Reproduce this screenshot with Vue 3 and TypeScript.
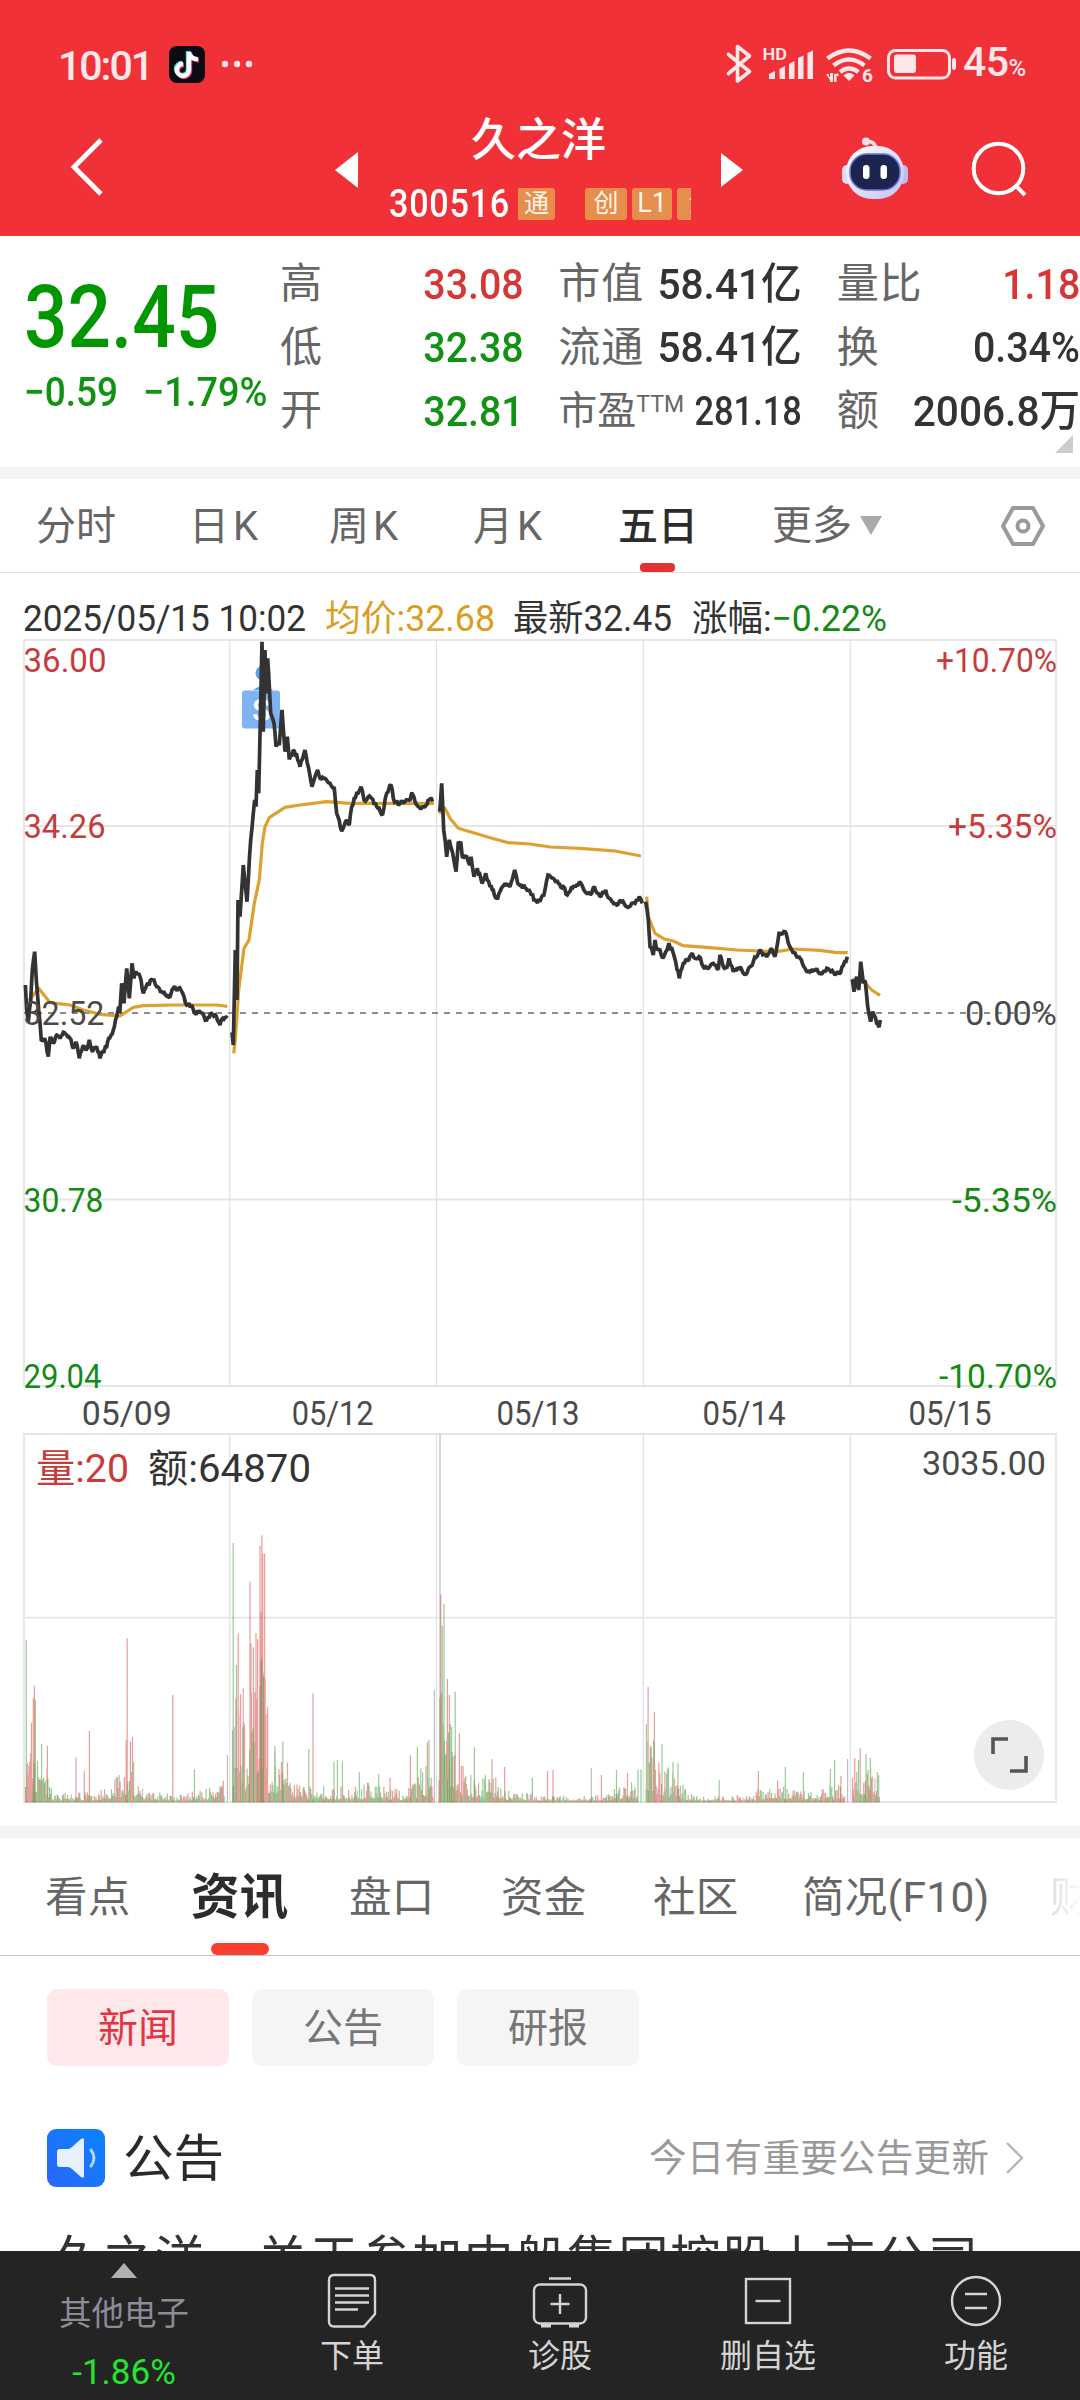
<script setup lang="ts">
type Point = [number, number]
type Tone = 'up' | 'down' | 'flat'
type Spike = [number, number, Tone]

const stats = [
  [{ k: '高', v: '33.08', c: 'red' }, { k: '市值', v: '58.41亿', c: 'wide' }, { k: '量比', v: '1.18', c: 'red' }],
  [{ k: '低', v: '32.38', c: 'green' }, { k: '流通', v: '58.41亿', c: 'wide' }, { k: '换', v: '0.34%' }],
  [{ k: '开', v: '32.81', c: 'green' }, { k: '市盈', sup: 'TTM', v: '281.18', c: 'small' }, { k: '额', v: '2006.8万', c: 'wide' }],
] as { k: string; v: string; c?: string; sup?: string }[][]

const periods = [
  { t: '分时', w: 153 },
  { t: '日K', w: 140, k: true },
  { t: '周K', w: 144, k: true },
  { t: '月K', w: 145, k: true },
  { t: '五日', w: 154, on: true },
]
const sections = [
  { t: '看点', w: 146 },
  { t: '资讯', w: 158, on: true },
  { t: '盘口', w: 152 },
  { t: '资金', w: 152 },
  { t: '社区', w: 149 },
  { t: '简况(F10)', w: 248 },
  { t: '财', w: 40, fade: true },
]

/* small deterministic generator, keeps the tick noise identical on each render */
function makeRandom(seed: number) {
  let s = seed
  return () => {
    s = (s * 1664525 + 1013904223) % 4294967296
    return s / 4294967296
  }
}

function parse(src: string, ox: number, oy: number): Point[] {
  return src.split(' ').map((p) => {
    const [x, y] = p.split(',').map(Number)
    return [ox + x / 3, oy + y / 3] as Point
  })
}

function smooth(pts: Point[]): string {
  return pts.map(([x, y], i) => `${i ? 'L' : 'M'}${x.toFixed(1)} ${y.toFixed(1)}`).join('')
}

const tick = makeRandom(11)
function jagged(pts: Point[]): string {
  let d = `M${pts[0][0]} ${pts[0][1]}`
  for (let i = 1; i < pts.length; i++) {
    const [x0, y0] = pts[i - 1]
    const [x1, y1] = pts[i]
    const n = Math.max(1, Math.round((x1 - x0) / 1.3))
    for (let j = 1; j < n; j++) {
      const t = j / n
      d += `L${(x0 + (x1 - x0) * t).toFixed(1)} ${(y0 + (y1 - y0) * t + (tick() - 0.5) * 4.6).toFixed(1)}`
    }
    d += `L${x1.toFixed(1)} ${y1.toFixed(1)}`
  }
  return d
}

const price = [
  jagged(parse('76,1215 80,1290 85,1325 92,1260 97,1170 104,1115 109,1200 116,1290 124,1380 134,1375 145,1430 150,1375 160,1390 170,1365 180,1375 190,1357 200,1365 210,1375 220,1405 228,1385 238,1435 248,1400 258,1410 268,1380 278,1415 290,1400 300,1435 308,1415 320,1400 326,1375 340,1350 350,1310 356,1280 359,1300 365,1210 372,1270 380,1165 388,1255 396,1150 402,1195 408,1175 420,1190 430,1240 440,1215 458,1200 470,1220 485,1235 500,1248 510,1250 520,1225 535,1225 548,1240 560,1275 575,1275 585,1300 600,1295 620,1320 632,1298 645,1305 660,1335 668,1315 682,1315', 0, 580)),
  jagged(parse('696,1357 700,1395 706,1110 711,1260 714,960 720,1010 730,855 741,965 752,780 760,700 764,660 768,680 772,570 776,640 786,185 790,455 795,210 798,340 803,235 812,400 822,430 828,500 838,495 846,390 855,515 862,470 868,538 880,510 890,525 900,560 915,510 922,550 936,620 945,590 953,570 960,595 975,595 990,610 1003,625 1010,700 1025,753 1040,720 1048,735 1055,680 1070,640 1083,620 1092,660 1105,650 1115,655 1130,680 1148,702 1160,640 1173,615 1180,655 1195,675 1215,665 1230,662 1235,638 1245,665 1262,688 1275,680 1285,658 1300,657', 0, 580)),
  jagged(parse('119,215 125,130 131,270 140,350 148,300 158,340 168,395 175,305 182,305 187,350 200,350 210,375 213,350 222,410 232,385 246,430 257,400 270,440 280,450 290,475 300,455 315,430 330,440 344,390 353,430 375,443 390,455 405,480 420,485 435,450 444,405 460,415 475,430 490,440 502,465 515,440 530,435 543,430 560,460 575,460 583,440 600,470 617,450 628,475 650,495 665,485 680,500 695,490 705,490 718,470 727,490', 400, 740)),
  jagged(parse('737,485 745,540 750,620 760,645 765,600 770,630 780,630 788,655 797,635 807,610 820,640 838,715 850,670 862,660 877,640 885,655 897,650 910,680 925,685 940,670 955,688 960,645 970,680 980,685 987,655 1000,695 1020,680 1037,703 1050,680 1060,665 1080,630 1100,650 1113,625 1125,650 1137,580 1155,575 1165,610 1180,640 1200,655 1215,685 1230,695 1250,685 1265,703 1280,685 1305,705 1322,697 1342,650', 400, 740)),
  jagged(parse('1357,718 1362,755 1370,710 1376,750 1382,665 1390,730 1396,725 1403,800 1412,845 1418,815 1430,850 1437,862 1441,840', 400, 740)),
]

const average = [
  smooth(parse('86,1262 104,1240 116,1225 150,1268 210,1275 250,1290 300,1303 360,1308 400,1282 430,1277 520,1275 650,1275 682,1279', 0, 580)),
  smooth(parse('701,1420 706,1380 716,1230 732,1105 747,1080 763,970 778,900 787,790 795,740 808,713 855,682 900,675 980,665 1050,670 1302,670', 0, 580)),
  smooth(parse('117,220 135,205 150,235 175,265 210,275 260,290 325,308 390,312 450,321 540,325 645,333 723,348', 400, 740)),
  smooth(parse('740,470 745,530 765,580 795,598 820,603 850,617 930,623 1010,630 1080,633 1130,635 1180,627 1260,631 1310,638 1343,638', 400, 740)),
  smooth(parse('1357,718 1395,728 1415,750 1440,766', 400, 740)),
]

/* session envelopes (x, height) and the individual peaks (x, top, direction) */
const envelopes: Point[][] = [
  [[25.5, 70], [36, 62], [48, 35], [52, 10], [93, 11], [113, 24], [124, 32], [134, 34], [142, 14], [183, 8], [206, 16], [225, 32]],
  [[232.5, 90], [238, 120], [246, 70], [253, 140], [264, 160], [268, 60], [277, 58], [287, 42], [294, 24], [303, 16], [367, 20], [408, 14], [427, 44], [433, 22]],
  [[439, 130], [446, 110], [458, 62], [465, 32], [484, 28], [500, 25], [511, 12], [546, 8], [600, 8], [622, 18], [638, 24]],
  [[646, 80], [656, 46], [673, 32], [685, 16], [698, 6], [748, 8], [778, 26], [790, 14], [820, 14], [845, 24]],
  [[852.5, 48], [860, 42], [879.5, 32]],
]
const spikes: Spike[] = [
  [26.3, 1640, 'down'], [34.4, 1685.7, 'up'], [33.3, 1698, 'up'], [35.4, 1700, 'down'], [31.5, 1722.7, 'up'], [41.6, 1744, 'down'], [47.4, 1745.7, 'up'],
  [76, 1757.3, 'up'], [84.3, 1771, 'up'], [89.4, 1731, 'up'], [127.2, 1638.3, 'up'], [126.2, 1740, 'up'], [130.4, 1741.7, 'up'], [132.4, 1736.7, 'up'],
  [133.6, 1762, 'down'], [172.8, 1695, 'up'], [194.5, 1769.3, 'down'], [227.4, 1754.7, 'flat'],
  [233.2, 1543, 'down'], [236.5, 1665, 'down'], [238.2, 1633.3, 'up'], [240.5, 1694.3, 'up'], [243.2, 1688.3, 'up'], [250, 1581.7, 'up'], [251, 1643.3, 'up'],
  [253.4, 1647.3, 'up'], [256, 1633, 'up'], [257.6, 1639, 'up'], [260, 1546, 'up'], [261, 1612, 'up'], [261.9, 1535.3, 'up'], [262.8, 1554, 'up'], [264.6, 1554, 'up'],
  [263.5, 1676.7, 'down'], [267.6, 1706.7, 'up'], [275, 1746, 'down'], [282.8, 1741.7, 'down'], [308.8, 1749, 'down'], [313, 1693.3, 'up'],
  [334, 1761.7, 'down'], [337.4, 1760, 'down'], [342.4, 1761.7, 'down'], [359.4, 1772.3, 'down'], [378.7, 1774, 'down'], [390, 1778, 'up'], [410.4, 1755.3, 'up'],
  [417.4, 1746.7, 'down'], [427.4, 1742.3, 'up'], [429, 1740, 'down'], [434.4, 1690, 'flat'],
  [440, 1434, 'flat'], [440.8, 1594.3, 'up'], [442.3, 1625.7, 'down'], [444, 1603.7, 'down'], [447.4, 1679, 'up'], [449.4, 1695, 'up'], [455.2, 1691.7, 'down'],
  [451.7, 1726.7, 'down'], [459.4, 1733.3, 'up'], [474.4, 1747.3, 'down'], [492, 1759, 'up'], [504.6, 1767, 'up'], [532.4, 1778, 'down'], [547.5, 1771, 'up'],
  [553, 1770, 'up'], [591.3, 1768, 'flat'], [601.4, 1775, 'up'], [616.5, 1770, 'down'], [627.5, 1773, 'up'], [638, 1769.3, 'down'], [641, 1769.3, 'down'],
  [646.4, 1724, 'down'], [648.1, 1687, 'up'], [653.6, 1740.7, 'down'], [654.4, 1712, 'up'], [662, 1744, 'down'], [673, 1762, 'down'], [678, 1763.3, 'down'],
  [719.2, 1780, 'down'], [758.4, 1771, 'up'], [785.3, 1767, 'down'], [803.4, 1772, 'down'], [834.6, 1760, 'down'], [830.4, 1769, 'down'], [840.9, 1776, 'up'],
  [847.6, 1759, 'flat'], [860.2, 1748, 'up'], [854.8, 1758, 'up'], [866, 1754, 'down'], [870.3, 1758, 'down'], [878.7, 1775.3, 'down'],
]

const FLOOR = 1802.5
function buildVolume(): Record<Tone, string> {
  const rnd = makeRandom(77)
  const out: Record<Tone, string> = { up: '', down: '', flat: '' }
  for (const env of envelopes) {
    let k = 0
    for (let x = env[0][0]; x <= env[env.length - 1][0]; x += 0.86) {
      while (k < env.length - 2 && x > env[k + 1][0]) k++
      const [x0, h0] = env[k]
      const [x1, h1] = env[k + 1]
      const top = h0 + ((h1 - h0) * (x - x0)) / (x1 - x0)
      const r = rnd()
      const h = Math.max(2, top * (0.16 + 0.84 * r * r))
      const pick = rnd()
      const tone: Tone = pick < 0.5 ? 'up' : pick < 0.96 ? 'down' : 'flat'
      out[tone] += `M${x.toFixed(1)} ${FLOOR}V${(FLOOR - h).toFixed(1)}`
    }
  }
  for (const [x, y, tone] of spikes) out[tone] += `M${x} ${FLOOR}V${y}`
  return out
}
const volume = buildVolume()

const scale = [
  { y: 671.7, l: '36.00', lw: 83, r: '+10.70%', rw: 121, c: '#c93a3a' },
  { y: 837.5, l: '34.26', lw: 82, r: '+5.35%', rw: 109, c: '#c93a3a' },
  { y: 1024.5, l: '32.52', lw: 81, r: '0.00%', rw: 92, c: '#4a4a4a' },
  { y: 1211.5, l: '30.78', lw: 80, r: '-5.35%', rw: 105, c: '#138a13' },
  { y: 1387.5, l: '29.04', lw: 78, r: '-10.70%', rw: 118, c: '#138a13' },
]
const dates = [
  { x: 126.7, t: '05/09', w: 90 },
  { x: 332.7, t: '05/12', w: 82 },
  { x: 538, t: '05/13', w: 83 },
  { x: 744, t: '05/14', w: 83 },
  { x: 950, t: '05/15', w: 83 },
]
const columns = [229.7, 436.5, 643.3, 850.3]
</script>

<template>
  <div class="app">
    <header class="top">
      <div class="status">
        <span class="clock">10:01</span>
        <svg class="note" width="36" height="37" viewBox="0 0 36 37">
          <rect width="36" height="37" rx="8" fill="#0b0b14" />
          <g fill="none" stroke-width="4.400">
            <path d="M19 5v18a6 6 0 1 1-6-6M19 5c.6 5 4 8 9 8" stroke="#3fe0dc" />
            <path d="M21 7v18a6 6 0 1 1-6-6M21 7c.6 5 4 7 9 7.400" stroke="#f0335c" />
            <path d="M20 6v18a6 6 0 1 1-6-6M20 6c.6 5 4 7 9 7.400" stroke="#fff" />
          </g>
        </svg>
        <svg class="dots" width="32" height="8" viewBox="0 0 32 8" fill="#ffe6e8"><circle cx="4" cy="4" r="3.200" /><circle cx="16" cy="4" r="3.200" /><circle cx="28" cy="4" r="3.200" /></svg>
        <svg class="sys" width="236" height="44" viewBox="724 42 236 44" fill="none" stroke="#ffe6e8">
          <path d="M728.500 54.500l21 17-12 9.500V46.500l12 9.500-21 17.500" stroke-width="3.600" stroke-linejoin="round" stroke-linecap="round" />
          <g fill="#ffe6e8" stroke="none">
            <text x="762.500" y="60.300" font-size="17" font-weight="600" textLength="24.500" lengthAdjust="spacingAndGlyphs" font-family="Roboto">HD</text>
            <path d="M769 79v-5l6-3v8zM779.500 79V69l5.500-3v13zM789 79V64l5.500-3v18zM798 79V58l5.500-2.500V79zM807.500 79V53l5.500-2.500V79z" />
            <path d="M849 80.500l-5-5q5-4 10 0z" stroke="#ffe6e8" stroke-width="1" />
            <text x="862" y="82" font-size="19" font-weight="700" font-family="Roboto">6</text>
            <path d="M826 74h3v3h1v-4h3v9h-3v-2zM834 74v8h2.500v-6h2v-2.500z" />
          </g>
          <path d="M827.500 58.500q21.500-16 43 0M833.500 65.500q15.500-12 31 0M840 72q9-7 18.500 0" stroke-width="4.400" />
          <rect x="888.500" y="50.500" width="61" height="27.500" rx="7" stroke-width="3" />
          <rect x="894" y="54.500" width="22" height="18.500" rx="3" fill="#ffe6e8" stroke="none" />
          <path d="M954 60v8" stroke-width="4" stroke-linecap="round" />
        </svg>
        <span class="level">45<small>%</small></span>
      </div>
      <div class="titlebar">
        <svg class="back" width="40" height="64" viewBox="0 0 40 64"><path d="M34 5L7 32l27 27" fill="none" stroke="#fff" stroke-width="4.800" /></svg>
        <svg class="prev" width="24" height="36" viewBox="0 0 24 36"><path d="M23 0v36L0 18z" fill="#fff" /></svg>
        <div class="name">
          <h1>久之洋</h1>
          <div class="code">
            <b>300516</b>
            <div class="tags">
              <i class="tag first">通</i><i class="tag second">创</i><i class="tag third">L1</i><i class="tag cut">沪</i>
            </div>
          </div>
        </div>
        <svg class="next" width="24" height="34" viewBox="0 0 24 34"><path d="M0 0v34l22-17z" fill="#fff" /></svg>
        <svg class="robot" width="66" height="66" viewBox="0 0 66 66">
          <defs>
            <linearGradient id="shell" x1="0" y1="0" x2="1" y2="1"><stop offset="0" stop-color="#fff" /><stop offset="1" stop-color="#c3c2f3" /></linearGradient>
          </defs>
          <path d="M24 5c6-2 9 2 10 6" fill="none" stroke="#f7dfee" stroke-width="3.600" />
          <circle cx="24" cy="4.500" r="4" fill="#f7dfee" />
          <rect x="0" y="28" width="10" height="19" rx="5" fill="#dcdcf6" />
          <rect x="56" y="28" width="10" height="19" rx="5" fill="#bfbdf0" />
          <rect x="4" y="9" width="58" height="53" rx="26" fill="url(#shell)" />
          <rect x="8" y="17" width="50" height="36" rx="17" fill="#1c2550" stroke="#6d72d8" stroke-width="1.500" />
          <rect x="21" y="28" width="6.500" height="14" rx="3.200" fill="#fff" /><rect x="38.500" y="28" width="6.500" height="14" rx="3.200" fill="#fff" />
        </svg>
        <svg class="search" width="60" height="60" viewBox="0 0 60 60" fill="none" stroke="#fff" stroke-width="4"><circle cx="28.500" cy="28.500" r="24.800" /><path d="M45 45l10 10" /></svg>
      </div>
    </header>

    <section class="quote">
      <div class="last">
        <div class="big"><span>32.45</span></div>
        <div class="change"><span>−0.59</span><span>−1.79%</span></div>
      </div>
      <div class="stats">
        <div v-for="(row, i) in stats" :key="i" class="stat-row">
          <div v-for="s in row" :key="s.k" class="stat">
            <span class="key" :class="{ tight: s.sup }">{{ s.k }}<sup v-if="s.sup">{{ s.sup }}</sup></span>
            <span class="val" :class="s.c">{{ s.v }}</span>
          </div>
        </div>
      </div>
      <svg class="corner" width="18" height="18" viewBox="0 0 18 18"><path d="M18 0v18H0z" fill="#ccc" /></svg>
    </section>
    <div class="gap"></div>

    <nav class="periods">
      <span v-for="p in periods" :key="p.t" class="period" :class="{ on: p.on, k: p.k }" :style="{ width: p.w + 'px' }">{{ p.t }}</span>
      <span class="more">更多<svg width="22" height="19" viewBox="0 0 22 19"><path d="M0 0h22L11 19z" fill="#aaa" /></svg></span>
      <svg class="gear" width="46" height="42" viewBox="0 0 46 42" fill="none" stroke="#9a9a9a" stroke-width="4"><path d="M13 3h20l10 18-10 18H13L3 21z" stroke-linejoin="round" /><circle cx="23" cy="21" r="5.500" /></svg>
    </nav>

    <svg class="chart" width="1080" height="1253" viewBox="0 573 1080 1253">
      <g font-size="36" fill="#333">
        <text x="23" y="630.500" textLength="283" lengthAdjust="spacingAndGlyphs">2025/05/15 10:02</text>
        <text x="325" y="630.500" textLength="170" lengthAdjust="spacingAndGlyphs" fill="#dc9d22">均价:32.68</text>
        <text x="513" y="630.500" textLength="159" lengthAdjust="spacingAndGlyphs">最新32.45</text>
        <text x="692" y="630.500" textLength="195" lengthAdjust="spacingAndGlyphs">涨幅:<tspan fill="#138a13">−0.22%</tspan></text>
      </g>
      <g fill="none" stroke="#e6e6e6" stroke-width="1.800">
        <path d="M24 640H1056V1386H24zM24 826H1056M24 1199.500H1056M24 1434H1056V1802H24zM24 1617.700H1056" />
        <path v-for="x in columns" :key="x" :d="`M${x} 640V1386M${x} 1434V1802`" stroke="#e0e0e0" stroke-width="1.200" />
      </g>
      <g fill="#7fb3f2">
        <circle cx="263" cy="673" r="7.500" fill="#5f9fe4" />
        <path d="M253 690l10-6 10 6z" fill="#5f9fe4" />
        <rect x="242" y="690.500" width="38" height="38" rx="3" />
        <text x="261.500" y="720.500" font-size="31" font-weight="500" text-anchor="middle" fill="#fff">S</text>
      </g>
      <path d="M24 1013H1056" stroke="#8c8c8c" stroke-width="1.800" stroke-dasharray="6 6" fill="none" />
      <g fill="none" stroke-linejoin="round">
        <path v-for="(d, i) in average" :key="'a' + i" :d="d" stroke="#dea030" stroke-width="3.200" />
        <path v-for="(d, i) in price" :key="'p' + i" :d="d" stroke="#333" stroke-width="3.700" stroke-linejoin="miter" stroke-miterlimit="1.500" />
      </g>
      <g font-size="33.500">
        <template v-for="s in scale" :key="s.y">
          <text x="23.500" :y="s.y" :textLength="s.lw" lengthAdjust="spacingAndGlyphs" :fill="s.c">{{ s.l }}</text>
          <text x="1057" :y="s.y" :textLength="s.rw" lengthAdjust="spacingAndGlyphs" text-anchor="end" :fill="s.c">{{ s.r }}</text>
        </template>
        <text v-for="d in dates" :key="d.t" :x="d.x" y="1425" :textLength="d.w" lengthAdjust="spacingAndGlyphs" text-anchor="middle" fill="#4a4a4a">{{ d.t }}</text>
        <text x="1046" y="1475" textLength="124" lengthAdjust="spacingAndGlyphs" text-anchor="end" fill="#4a4a4a">3035.00</text>
      </g>
      <g fill="none" stroke-width="1.200">
        <path :d="volume.flat" stroke="#888" stroke-opacity=".55" />
        <path :d="volume.up" stroke="#dc4f4d" stroke-opacity=".56" />
        <path :d="volume.down" stroke="#4aa343" stroke-opacity=".56" />
      </g>
      <g font-size="39">
        <text x="36" y="1481.500" textLength="93" lengthAdjust="spacingAndGlyphs" fill="#c93a3a">量:20</text>
        <text x="148" y="1481.500" textLength="163" lengthAdjust="spacingAndGlyphs" fill="#333">额:64870</text>
      </g>
      <circle cx="1009" cy="1755" r="35" fill="#ececec" />
      <path d="M993 1754v-15h15M1026 1756v15h-16" fill="none" stroke="#555" stroke-width="3.600" />
    </svg>
    <div class="gap"></div>

    <nav class="sections">
      <span v-for="s in sections" :key="s.t" class="section" :class="{ on: s.on, fade: s.fade }" :style="{ width: s.w + 'px' }">{{ s.t }}</span>
    </nav>

    <main class="news">
      <div class="chips"><span class="chip on">新闻</span><span class="chip">公告</span><span class="chip">研报</span></div>
      <div class="notice">
        <svg width="58" height="58" viewBox="0 0 58 58">
          <defs><linearGradient id="blue" x1="0" y1="1" x2="1" y2="0"><stop offset="0" stop-color="#2a66fa" /><stop offset="1" stop-color="#0a84ff" /></linearGradient></defs>
          <rect width="58" height="58" rx="9" fill="url(#blue)" />
          <path d="M13 20h8q2 0 4-2l9-8q3-2 3 1v36q0 3-3 1l-9-8q-2-2-4-2h-8q-3 0-3-3V23q0-3 3-3z" fill="#e6f0ff" />
          <path d="M44 21q6 8 0 16" fill="none" stroke="#b8d6ff" stroke-width="3" stroke-linecap="round" />
        </svg>
        <h2>公告</h2>
        <span class="hint">今日有重要公告更新</span>
        <svg class="chev" width="20" height="34" viewBox="0 0 20 34"><path d="M2 2l15 15L2 32" fill="none" stroke="#b5b5b5" stroke-width="2.400" /></svg>
      </div>
      <p class="headline">久之洋<span class="colon">：</span>关于参加中船集团控股上市公司</p>
    </main>

    <footer class="bar">
      <div class="sector">
        <svg width="26" height="15" viewBox="0 0 26 15"><path d="M13 0l13 15H0z" fill="#b0b0b0" /></svg>
        <span class="sector-name">其他电子</span>
        <span class="sector-change">-1.86%</span>
      </div>
      <div class="action">
        <svg width="52" height="56" viewBox="0 0 52 56" fill="none" stroke="#d4d4d4" stroke-width="2.400"><path d="M8 2h36q5 0 5 5v34L38 53.500H8q-5 0-5-5V7q0-5 5-5zM9 15.500h34M9 22.500h34M9 29.500h34M9 36.500h23" /></svg>
        <span>下单</span>
      </div>
      <div class="action">
        <svg width="58" height="56" viewBox="0 0 58 56" fill="none" stroke="#d4d4d4" stroke-width="2.400"><rect x="3" y="11.500" width="52" height="39" rx="6" /><path d="M18 5.500h22M29 21v20M19.500 31h19" /><path d="M10 52.500h10M38 52.500h10" stroke-width="4" /></svg>
        <span>诊股</span>
      </div>
      <div class="action">
        <svg width="52" height="56" viewBox="0 0 52 56" fill="none" stroke="#d4d4d4" stroke-width="2.400"><rect x="4" y="6" width="44" height="44" /><path d="M13.500 28h25" /></svg>
        <span>删自选</span>
      </div>
      <div class="action">
        <svg width="52" height="56" viewBox="0 0 52 56" fill="none" stroke="#d4d4d4" stroke-width="2.400"><circle cx="26" cy="28" r="24" /><path d="M15 21h22M15 35h22" /></svg>
        <span>功能</span>
      </div>
    </footer>
  </div>
</template>

<style>
body { margin: 0; background: #fff; }
</style>

<style scoped>
.app { width: 1080px; height: 2400px; overflow: hidden; display: flex; flex-direction: column; background: #fff; color: #333; font-family: Roboto, "Noto Sans CJK SC", sans-serif; }
.app > * { flex: none; }
svg { display: block; flex: none; }
h1, h2, p { margin: 0; font-weight: 400; }

.top { height: 236px; background: #f13138; color: #fff; display: flex; flex-direction: column; }
.status { height: 104px; padding: 24px 0 0 58px; box-sizing: border-box; display: flex; align-items: center; color: #ffe6e8; }
.clock { width: 111px; font-size: 41px; line-height: 40px; letter-spacing: -2px; padding-top: 3px; font-weight: 500; box-sizing: border-box; }
.dots { margin-left: 16px; }
.sys { margin-left: 471px; }
.level { margin-left: 3px; font-size: 41px; line-height: 40px; letter-spacing: -0.500px; font-weight: 500; padding-top: 2px; }
.level small { font-size: 24px; }
.titlebar { height: 132px; display: flex; align-items: flex-start; }
.back { margin: 31px 0 0 67px; }
.prev { margin: 48px 0 0 228px; }
.name { width: 305px; margin-left: 27px; height: 132px; display: flex; flex-direction: column; }
h1 { font-size: 45px; line-height: 64px; height: 65px; text-align: center; font-weight: 500; margin-top: 5px; }
.code { display: flex; align-items: center; height: 58px; }
.code b { width: 132px; flex: none; font-size: 38px; line-height: 40px; font-weight: 500; letter-spacing: 0.800px; transform: scaleX(.9); transform-origin: 0 50%; margin: 2px -3px 0 3px; }
.tags { display: flex; flex: 1; overflow: hidden; margin-top: 1px; }
.tag { flex: none; height: 32px; line-height: 31px; font-size: 25px; font-style: normal; text-align: center; background: #e68e4b; border-radius: 3px; box-sizing: border-box; color: #fff5ea; }
.first { width: 37px; border-radius: 0 3px 3px 0; }
.second { width: 42px; margin-left: 30px; }
.third { width: 40px; margin-left: 5px; font-size: 27px; }
.cut { width: 42px; margin-left: 5px; padding-left: 6px; }
.next { margin: 49px 0 0 30px; }
.robot { margin: 33px 0 0 97px; }
.search { margin: 36px 0 0 62px; }

.quote { position: relative; height: 231px; display: flex; }
.last { width: 280px; }
.big { height: 84px; margin: 39px 0 0 24px; font-size: 87px; line-height: 84px; color: #029702; font-weight: 500; }
.big span { display: inline-block; transform: scaleX(.88); transform-origin: 0 50%; }
.change { display: flex; margin: 9px 0 0 24px; font-size: 41px; line-height: 48px; font-weight: 500; color: #129212; }
.change span { width: 119px; flex: none; transform: scaleX(.925); transform-origin: 0 50%; white-space: nowrap; }
.change span:first-child { transform: scaleX(.9); }
.stats { width: 800px; padding-top: 16px; }
.stat-row { display: flex; height: 63.500px; gap: 35px; }
.stat { width: 243.500px; display: flex; justify-content: space-between; align-items: center; white-space: nowrap; }
.key { font-size: 42px; line-height: 62px; color: #666; letter-spacing: 0.800px; padding-top: 1px; }
.key.tight { font-size: 39px; letter-spacing: 0; }
.key sup { font-size: 23px; line-height: 1; vertical-align: 12px; }
.val { font-size: 43px; line-height: 60px; font-weight: 500; transform: scaleX(.915); transform-origin: 100% 50%; }
.val.wide { transform: scaleX(.945); margin-left: -20px; }
.val.small { font-size: 41px; transform: scaleX(.84); margin-left: -30px; }
.red { color: #d63636; }
.green { color: #129212; }
.corner { position: absolute; right: 7px; bottom: 14px; }
.gap { height: 12px; background: #f4f4f4; }

.periods { height: 94px; box-sizing: border-box; border-bottom: 1.500px solid #e2e2e2; padding-left: 36px; display: flex; align-items: center; font-size: 40px; color: #666; }
.period { position: relative; height: 92px; line-height: 93px; white-space: nowrap; }
.period.k { letter-spacing: 4px; }
.period.on { color: #2c2c2c; font-weight: 500; }
.period.on::after { content: ""; position: absolute; left: 22px; bottom: 0; width: 35px; height: 9px; border-radius: 4px; background: #e03232; }
.more { width: 228px; display: flex; align-items: center; line-height: 93px; }
.more svg { margin: 0 0 0 8px; }
.chart text { font-family: Roboto, "Noto Sans CJK SC", sans-serif; }

.sections { height: 118px; box-sizing: border-box; border-bottom: 1.500px solid #c4c4c4; padding-left: 45px; display: flex; overflow: hidden; font-size: 42.500px; line-height: 119px; color: #666; }
.section { position: relative; flex: none; white-space: nowrap; letter-spacing: 0.300px; }
.section.on { color: #2c2c2c; font-size: 48.500px; font-weight: 700; }
.section.on::after { content: ""; position: absolute; left: 20px; top: 105px; width: 58px; height: 12px; border-radius: 6px; background: #fa3e32; }
.fade { color: #ddd; -webkit-mask-image: linear-gradient(90deg, #000, transparent 34px); mask-image: linear-gradient(90deg, #000, transparent 34px); }

.news { height: 295px; overflow: hidden; }
.chips { display: flex; gap: 23px; padding: 33px 0 0 47px; }
.chip { width: 182px; height: 77px; line-height: 79px; border-radius: 10px; background: #f5f5f5; color: #777; font-size: 40px; text-align: center; }
.chip.on { background: #ffe8e9; color: #e13545; }
.notice { display: flex; align-items: center; height: 60px; margin: 62px 0 0 47px; }
h2 { width: 102px; margin: 1px 0 0 18px; font-size: 50.500px; line-height: 60px; font-weight: 400; color: #2a2a2a; }
.hint { margin-left: 424px; font-size: 37.500px; line-height: 60px; color: #999; letter-spacing: 0.300px; }
.chev { margin-left: 16px; }
.headline { margin: 40px 0 0 51px; font-size: 50px; letter-spacing: 1.600px; line-height: 64px; white-space: nowrap; }
.colon { line-height: 0; vertical-align: -12px; }

.bar { height: 149px; background: #242424; display: flex; color: #d4d4d4; font-size: 32px; }
.sector { width: 248px; display: flex; flex-direction: column; align-items: center; padding-top: 12px; box-sizing: border-box; }
.sector-name { margin-top: 14px; line-height: 44px; font-size: 32.500px; color: #8c8b96; }
.sector-change { margin-top: 15px; line-height: 44px; font-size: 35px; color: #24e62c; }
.action { width: 208px; display: flex; flex-direction: column; align-items: center; padding-top: 22px; box-sizing: border-box; }
.action span { line-height: 44px; margin-top: 5px; }
</style>
